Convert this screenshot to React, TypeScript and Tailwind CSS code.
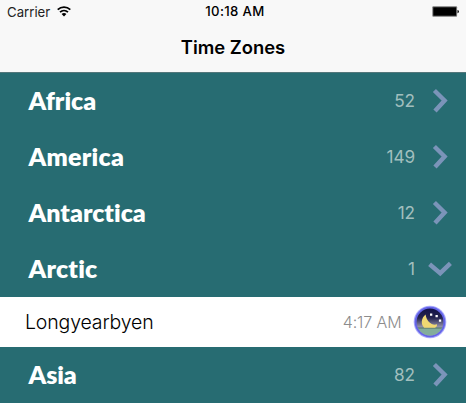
type Region = { name: string; count: number; tracking: string; open?: boolean };

const regions: Region[] = [
  { name: "Africa", count: 52, tracking: "tracking-[0px]" },
  { name: "America", count: 149, tracking: "tracking-[0.25px]" },
  { name: "Antarctica", count: 12, tracking: "tracking-[0px]" },
  { name: "Arctic", count: 1, tracking: "tracking-[0.2px]", open: true },
];

const asia: Region = { name: "Asia", count: 82, tracking: "tracking-[-0.1px]" };

function Chevron({ open }: { open?: boolean }) {
  return (
    <svg width="26" height="26" viewBox="0 0 26 26" fill="none" stroke="#7b94b9" strokeWidth="4.4">
      <path d={open ? "M2.6 8.2 L13.2 17.2 L23.4 7.4" : "M7.4 2.5 L17.6 12.5 L8 23.1"} />
    </svg>
  );
}

function RegionRow({ region }: { region: Region }) {
  return (
    <div className="flex h-14 shrink-0 items-center bg-[#276c72] pr-[13px] pl-[28.5px]">
      <span
        className={`grow pb-[2px] font-['Lato',sans-serif] text-[25px] leading-8 font-extrabold text-white [font-variant-ligatures:none] ${region.tracking}`}
      >
        {region.name}
      </span>
      <span className="pr-[12px] text-[17.2px] tracking-[-0.1px] text-[#a1bfbe]">{region.count}</span>
      <Chevron open={region.open} />
    </div>
  );
}

function NightBadge() {
  return (
    <svg width="34" height="34" viewBox="0 0 34 34">
      <defs>
        <linearGradient id="sky" x1="0" y1="0" x2="0" y2="1">
          <stop offset="0" stopColor="#0b0b42" />
          <stop offset="0.38" stopColor="#24244f" />
          <stop offset="0.68" stopColor="#a3a1b9" />
        </linearGradient>
        <clipPath id="disc">
          <circle cx="17" cy="17" r="13.4" />
        </clipPath>
      </defs>
      <circle cx="17" cy="17" r="16.3" fill="#a9a9fb" />
      <circle cx="17" cy="17" r="15.3" fill="#6464e8" />
      <g clipPath="url(#disc)">
        <rect width="34" height="34" fill="url(#sky)" />
        <rect y="22.7" width="34" height="12" fill="#82ad9b" />
        <path d="M3 23H31" stroke="#527062" strokeWidth="1" />
        <path
          d="M12.6 9.6C8 13 7.6 19.8 11.2 22.7H22C23.7 21.9 24.3 20.6 24 19.2C19.8 21 13.6 17.5 12.6 9.6Z"
          fill="#efd873"
        />
        <path d="M17 8.5h2.3v2.3H17zM22.5 9.9h2.3v2.3h-2.3zM25.9 14.4h2.3v2.3h-2.3z" fill="#fff" />
      </g>
    </svg>
  );
}

export default function App() {
  return (
    <div className="flex h-[403px] w-[466px] flex-col overflow-hidden bg-white font-['Inter',sans-serif]">
      <header className="h-[73px] shrink-0 border-b border-[#53777b] bg-[#f8f8f8] text-black">
        <div className="grid h-6 grid-cols-3 items-center pr-[7px] pl-[7px]">
          <div className="flex items-center gap-[7px] pt-px text-[13.2px] text-[#222]">
            <span>Carrier</span>
            <svg className="-mt-px" width="14" height="11" viewBox="0 0 14 11" fill="none" stroke="#000" strokeWidth="1.7">
              <path d="M.7 3.7C4.3.3 9.7.3 13.3 3.7" />
              <path d="M3 6.2C5.3 4 8.7 4 11 6.2" />
              <path d="M4.6 8C6 6.8 8 6.8 9.4 8L7 10.4Z" fill="#000" stroke="none" />
            </svg>
          </div>
          <div className="pl-[4px] text-center text-[13.2px] font-medium tracking-[0.35px]">10:18 AM</div>
          <svg className="-mt-[2px] justify-self-end" width="27" height="11" viewBox="0 0 27 11">
            <rect x=".3" y=".3" width="24.8" height="10.4" rx="1" fill="#777" />
            <rect x="1.3" y="1.3" width="22.8" height="8.4" fill="#000" />
            <path d="M25.5 4C27.4 4.2 27.4 7 25.5 7.2Z" fill="#000" />
          </svg>
        </div>
        <h1 className="text-center text-[18.4px] leading-[47px] font-semibold">Time Zones</h1>
      </header>
      {regions.map((region) => (
        <RegionRow key={region.name} region={region} />
      ))}
      <div className="flex h-[50px] shrink-0 items-center bg-white pr-[19px] pl-[25px]">
        <span className="grow pt-px text-[19.5px] font-light tracking-[-0.15px] text-black">Longyearbyen</span>
        <span className="pr-[11.5px] text-[16px] font-light tracking-[-0.1px] text-[#8c8c8c]">4:17 AM</span>
        <NightBadge />
      </div>
      <RegionRow region={asia} />
    </div>
  );
}
